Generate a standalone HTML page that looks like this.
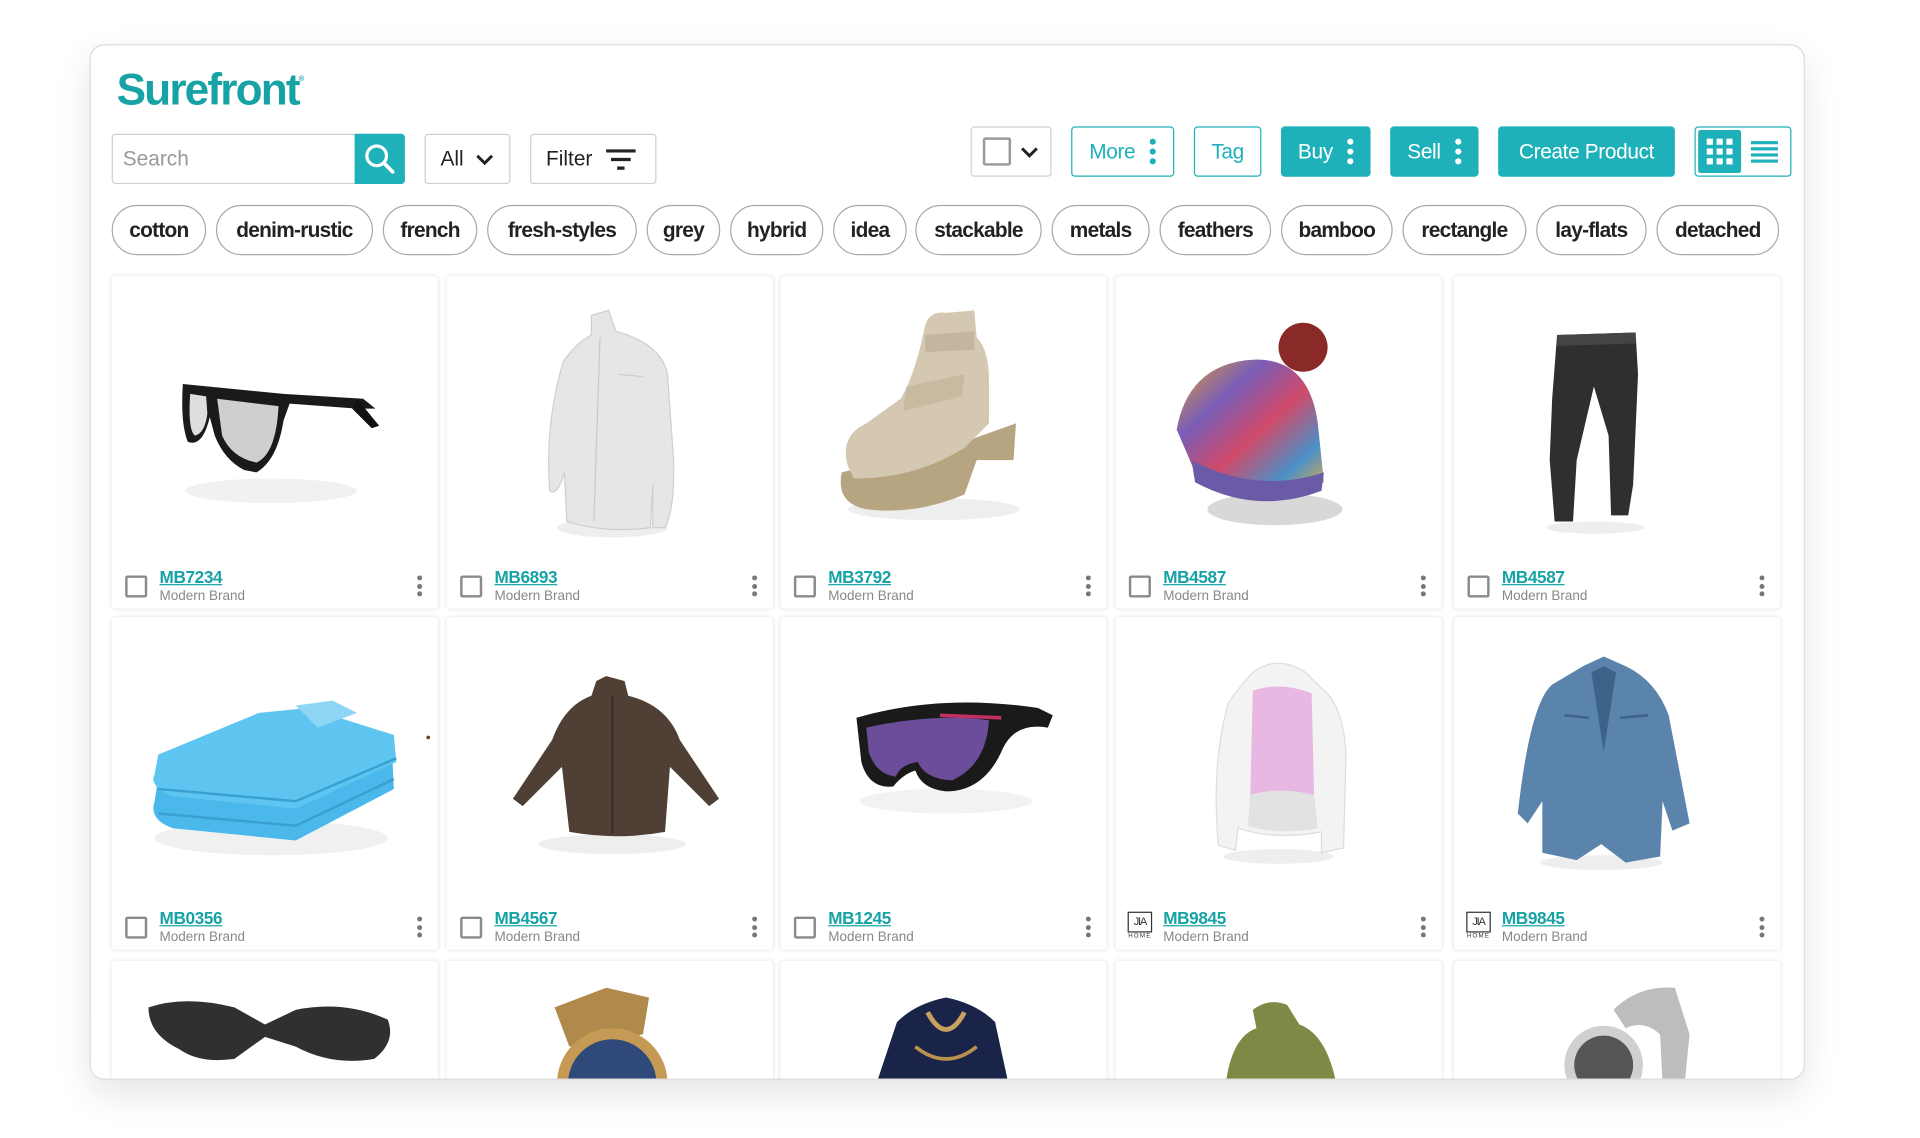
<!DOCTYPE html>
<html><head><meta charset="utf-8">
<style>
*{box-sizing:border-box;margin:0;padding:0}
html,body{width:1920px;height:1138px;overflow:hidden;background:#fff;font-family:"Liberation Sans",Arial,sans-serif}
#wrap{position:absolute;left:0;top:0;width:1550px;height:919px;transform:scale(1.227);transform-origin:0 0;overflow:hidden}
.panel{position:absolute;left:73px;top:36px;width:1398px;height:844px;border:1.5px solid #dcdcdc;border-radius:12px;background:#fff;overflow:hidden;box-shadow:0 12px 30px rgba(0,0,0,.10)}
.abs{position:absolute}
.logo{left:21px;top:15px;font-size:36px;color:#17a3a6;letter-spacing:-1.5px;font-weight:bold}
.logo sup{font-size:6px;letter-spacing:0;vertical-align:top;position:relative;top:10px}
.box{position:absolute;border:1.5px solid #cfcfcf;border-radius:3px;background:#fff;display:flex;align-items:center;font-size:17px;color:#222}
.btn{position:absolute;border:1.5px solid #1fb1ba;border-radius:3px;display:flex;align-items:center;justify-content:center;font-size:17px;color:#1fb1ba;letter-spacing:-0.3px}
.fill{background:#1fb1ba;color:#fff}
.dots{display:inline-flex;flex-direction:column;gap:3px;margin-left:12px}
.dots i{width:5px;height:5px;border-radius:50%;background:currentColor;display:block}
.pill{position:absolute;top:130px;height:41px;border:1.5px solid #a9a9a9;border-radius:21px;display:flex;align-items:center;justify-content:center;font-weight:bold;font-size:17px;letter-spacing:-0.6px;color:#222}
.card{position:absolute;width:266px;height:271px;background:#fff;border-radius:3px;box-shadow:0 0 3px rgba(0,0,0,.13)}
.card svg{position:absolute;left:0;top:0}
.cb{position:absolute;left:11px;top:244px;width:18px;height:18px;border:2px solid #8a8a8a;border-radius:2px}
.code{position:absolute;left:39px;top:237px;font-size:14px;font-weight:bold;color:#17a3a6;text-decoration:underline;letter-spacing:-0.3px}
.brand{position:absolute;left:39px;top:255px;font-size:11px;color:#888}
.kd{position:absolute;left:249px;top:244px;display:flex;flex-direction:column;gap:2.5px}
.kd i{width:4px;height:4px;border-radius:50%;background:#777;display:block}
.jia{position:absolute;left:10px;top:240px;width:20px;height:26px;font-size:9px;text-align:center;color:#333}
.jia b{display:block;border:1px solid #333;height:17px;line-height:15px;font-weight:normal;letter-spacing:-1px}
.jia span{font-size:5px;display:block;line-height:7px;letter-spacing:1px}
</style></head><body><div id="wrap">
<div class="panel">
<div class="abs logo">Surefront<sup>®</sup></div>

<div class="box" style="left:17px;top:72px;width:200px;height:41px;padding-left:8px;color:#999">Search</div>
<div class="abs" style="left:215px;top:72px;width:41px;height:41px;background:#1fb1ba;border-radius:0 3px 3px 0">
<svg width="41" height="41" viewBox="0 0 41 41"><circle cx="18" cy="18" r="8" fill="none" stroke="#fff" stroke-width="2.6"/><path d="M24 24l7 7" stroke="#fff" stroke-width="3" stroke-linecap="round"/></svg></div>
<div class="box" style="left:272px;top:72px;width:70px;height:41px;padding-left:12px">All<svg style="margin-left:9px" width="16" height="12" viewBox="0 0 16 12"><path d="M2 3l6 6 6-6" fill="none" stroke="#222" stroke-width="2.4"/></svg></div>
<div class="box" style="left:358px;top:72px;width:103px;height:41px;padding-left:12px">Filter<svg style="margin-left:10px" width="26" height="18" viewBox="0 0 26 18"><path d="M1 2h24M5 9h16M10 16h6" stroke="#222" stroke-width="2.6"/></svg></div>

<div class="box" style="left:717px;top:66px;width:66px;height:41px;padding-left:9px"><span style="width:23px;height:23px;border:2.5px solid #999;border-radius:2px;display:block"></span><svg style="margin-left:7px" width="16" height="12" viewBox="0 0 16 12"><path d="M2 3l6 6 6-6" fill="none" stroke="#222" stroke-width="2.4"/></svg></div>
<div class="btn" style="left:799px;top:66px;width:84px;height:41px">More<span class="dots"><i></i><i></i><i></i></span></div>
<div class="btn" style="left:899px;top:66px;width:55px;height:41px">Tag</div>
<div class="btn fill" style="left:970px;top:66px;width:73px;height:41px">Buy<span class="dots"><i></i><i></i><i></i></span></div>
<div class="btn fill" style="left:1059px;top:66px;width:72px;height:41px">Sell<span class="dots"><i></i><i></i><i></i></span></div>
<div class="btn fill" style="left:1147px;top:66px;width:144px;height:41px">Create Product</div>
<div class="btn" style="left:1307px;top:66px;width:79px;height:41px;justify-content:flex-start;padding:2px">
<div style="width:35px;height:35px;background:#1fb1ba;border-radius:2px;position:relative"><svg width="35" height="35" viewBox="0 0 35 35" fill="#fff"><rect x="7" y="7" width="5" height="5"/><rect x="15" y="7" width="5" height="5"/><rect x="23" y="7" width="5" height="5"/><rect x="7" y="15" width="5" height="5"/><rect x="15" y="15" width="5" height="5"/><rect x="23" y="15" width="5" height="5"/><rect x="7" y="23" width="5" height="5"/><rect x="15" y="23" width="5" height="5"/><rect x="23" y="23" width="5" height="5"/></svg></div>
<svg style="margin-left:7px" width="24" height="22" viewBox="0 0 24 22" fill="#1fb1ba"><rect x="1" y="2" width="22" height="2.6"/><rect x="1" y="7" width="22" height="2.6"/><rect x="1" y="12" width="22" height="2.6"/><rect x="1" y="17" width="22" height="2.6"/></svg></div>

<div class="pill" style="left:17px;width:77px">cotton</div>
<div class="pill" style="left:102px;width:128px">denim-rustic</div>
<div class="pill" style="left:238px;width:77px">french</div>
<div class="pill" style="left:323px;width:122px">fresh-styles</div>
<div class="pill" style="left:453px;width:60px">grey</div>
<div class="pill" style="left:521px;width:76px">hybrid</div>
<div class="pill" style="left:605px;width:60px">idea</div>
<div class="pill" style="left:672px;width:103px">stackable</div>
<div class="pill" style="left:783px;width:80px">metals</div>
<div class="pill" style="left:871px;width:91px">feathers</div>
<div class="pill" style="left:970px;width:91px">bamboo</div>
<div class="pill" style="left:1069px;width:101px">rectangle</div>
<div class="pill" style="left:1178px;width:90px">lay-flats</div>
<div class="pill" style="left:1276px;width:100px">detached</div>

<!-- Row 1 -->
<div class="card" style="left:17px;top:188px"><svg width="266" height="230"><ellipse cx="130" cy="175" rx="70" ry="10" fill="#f1f1f1"/><path d="M58 88 L140 96 L205 100 L215 108 L200 108 L145 104 L140 118 Q135 150 118 160 L108 158 Q92 150 84 130 L80 115 Q74 140 62 135 Q56 120 58 88Z" fill="#1a1a1a"/><path d="M64 96 Q62 126 68 130 Q76 128 78 112 L77 98Z" fill="#ddd"/><path d="M86 100 L136 106 Q134 145 118 152 Q98 148 90 130Z" fill="#cfcfcf"/><path d="M200 100 L218 122 L212 124 L196 108Z" fill="#111"/></svg>
<div class="cb"></div><div class="code">MB7234</div><div class="brand">Modern Brand</div><div class="kd"><i></i><i></i><i></i></div></div>

<div class="card" style="left:290px;top:188px"><svg width="266" height="230"><ellipse cx="135" cy="205" rx="45" ry="8" fill="#eee"/><path d="M118 32 L132 28 L138 45 Q175 55 180 80 L185 150 Q186 190 178 205 L168 205 L168 170 L166 205 Q130 210 98 200 L96 160 Q90 180 84 175 Q80 120 95 70 Q105 55 118 48Z" fill="#e6e6e6" stroke="#cfcfcf"/><path d="M125 50 L120 200" stroke="#c9c9c9"/><path d="M140 80 L160 82" stroke="#ccc"/></svg>
<div class="cb"></div><div class="code">MB6893</div><div class="brand">Modern Brand</div><div class="kd"><i></i><i></i><i></i></div></div>

<div class="card" style="left:562px;top:188px"><svg width="266" height="230"><ellipse cx="125" cy="190" rx="70" ry="9" fill="#eee"/><path d="M50 160 Q45 185 70 190 Q110 195 150 178 L160 150 L190 150 L192 120 L150 135Z" fill="#b7a582"/><path d="M55 155 Q48 130 70 120 L98 100 Q110 80 118 40 Q122 28 135 30 L158 28 L160 50 Q170 60 170 85 L170 120 L150 140 Q110 165 60 165Z" fill="#d5c8b2"/><path d="M118 48 L158 45 L158 60 L118 62Z" fill="#c4b69e"/><path d="M103 90 L150 80 L148 98 L100 110Z" fill="#c8baa1"/></svg>
<div class="cb"></div><div class="code">MB3792</div><div class="brand">Modern Brand</div><div class="kd"><i></i><i></i><i></i></div></div>

<div class="card" style="left:835px;top:188px"><svg width="266" height="230"><defs><linearGradient id="bn" x1="0" y1="0" x2="1" y2="1"><stop offset="0" stop-color="#e0a030"/><stop offset=".3" stop-color="#7a5db8"/><stop offset=".55" stop-color="#d04a6a"/><stop offset=".8" stop-color="#4a90c8"/><stop offset="1" stop-color="#e8b040"/></linearGradient></defs><ellipse cx="130" cy="190" rx="55" ry="13" fill="#d8d8d8"/><circle cx="153" cy="58" r="20" fill="#8a2a28"/><path d="M50 125 Q60 70 115 68 Q158 68 165 120 L170 168 Q120 190 65 160Z" fill="url(#bn)"/><path d="M62 150 Q115 178 170 160 L168 175 Q115 195 65 168Z" fill="#6a5aa8"/></svg>
<div class="cb"></div><div class="code">MB4587</div><div class="brand">Modern Brand</div><div class="kd"><i></i><i></i><i></i></div></div>

<div class="card" style="left:1111px;top:188px"><svg width="266" height="230"><ellipse cx="115" cy="205" rx="40" ry="5" fill="#eee"/><path d="M84 48 L148 46 L150 80 L146 170 L142 195 L128 195 L126 130 L114 90 L100 150 L97 200 L82 200 L78 150 L80 100Z" fill="#2f2f2f"/><path d="M84 48 L148 46 L148 55 L84 57Z" fill="#444"/></svg>
<div class="cb"></div><div class="code">MB4587</div><div class="brand">Modern Brand</div><div class="kd"><i></i><i></i><i></i></div></div>

<!-- Row 2 -->
<div class="card" style="left:17px;top:466px"><svg width="266" height="230"><ellipse cx="130" cy="180" rx="95" ry="14" fill="#f0f0f0"/><path d="M35 150 Q30 165 50 172 L150 182 L230 140 L228 100 L150 110 L40 118Z" fill="#4ab8ea"/><path d="M35 128 Q30 138 50 146 L150 156 L232 118 L230 96 L160 74 L120 78 L38 112Z" fill="#5ec5f0"/><path d="M150 72 L180 68 L200 78 L168 90Z" fill="#8dd6f5"/><path d="M38 140 L150 150 L232 115" fill="none" stroke="#3aa0d0" stroke-width="2"/><path d="M38 160 L150 170 L230 132" fill="none" stroke="#3aa0d0" stroke-width="2"/><circle cx="258" cy="98" r="1.5" fill="#7a3a10"/></svg>
<div class="cb"></div><div class="code">MB0356</div><div class="brand">Modern Brand</div><div class="kd"><i></i><i></i><i></i></div></div>

<div class="card" style="left:290px;top:466px"><svg width="266" height="230"><ellipse cx="135" cy="185" rx="60" ry="8" fill="#eee"/><path d="M122 52 L130 48 L145 52 L148 64 Q180 72 190 100 L222 148 L214 154 L182 122 L178 175 Q140 182 100 175 L94 122 L62 154 L54 148 L86 100 Q96 72 118 64Z" fill="#4f3f35"/><path d="M135 64 L135 176" stroke="#3a2e26" stroke-width="2"/></svg>
<div class="cb"></div><div class="code">MB4567</div><div class="brand">Modern Brand</div><div class="kd"><i></i><i></i><i></i></div></div>

<div class="card" style="left:562px;top:466px"><svg width="266" height="230"><ellipse cx="135" cy="150" rx="70" ry="10" fill="#f2f2f2"/><path d="M62 82 Q130 62 210 74 L222 80 L218 90 Q190 85 180 110 Q165 142 135 142 Q115 140 110 125 Q100 128 92 138 Q72 140 66 118Z" fill="#1a1a1a"/><path d="M70 90 Q125 78 170 84 Q168 120 140 133 Q118 132 112 118 Q98 120 94 130 Q78 128 72 110Z" fill="#6b4d9a"/><path d="M130 80 L180 82" stroke="#c03060" stroke-width="3"/></svg>
<div class="cb"></div><div class="code">MB1245</div><div class="brand">Modern Brand</div><div class="kd"><i></i><i></i><i></i></div></div>

<div class="card" style="left:835px;top:466px"><svg width="266" height="230"><ellipse cx="133" cy="195" rx="45" ry="6" fill="#eee"/><path d="M112 45 Q132 30 155 45 L168 58 Q185 70 188 110 L186 188 L168 192 L168 175 Q130 182 100 172 L98 190 L84 186 Q78 120 92 70 Q100 58 112 45Z" fill="#f3f3f3" stroke="#ddd"/><path d="M112 60 Q135 52 160 62 L162 145 Q132 138 110 145Z" fill="#e9b8e2"/><path d="M110 145 Q135 138 162 145 L165 172 Q132 178 108 170Z" fill="#e2e2e2"/></svg>
<div class="jia"><b>JIA</b><span>HOME</span></div><div class="code">MB9845</div><div class="brand">Modern Brand</div><div class="kd"><i></i><i></i><i></i></div></div>

<div class="card" style="left:1111px;top:466px"><svg width="266" height="230"><ellipse cx="120" cy="200" rx="50" ry="6" fill="#eee"/><path d="M105 40 L122 32 L140 40 Q165 52 175 80 L192 168 L178 174 L170 150 L168 195 L140 200 L120 185 L100 198 L72 192 L72 150 L60 168 L52 160 Q62 70 80 55Z" fill="#5a84ab"/><path d="M112 45 L122 40 L132 45 L122 110Z" fill="#3d6388"/><path d="M90 80 L110 82 M135 82 L158 80" stroke="#3d6388" stroke-width="2"/></svg>
<div class="jia"><b>JIA</b><span>HOME</span></div><div class="code">MB9845</div><div class="brand">Modern Brand</div><div class="kd"><i></i><i></i><i></i></div></div>

<!-- Row 3 -->
<div class="card" style="left:17px;top:746px"><svg width="266" height="230"><path d="M30 38 Q60 28 100 38 L125 52 L150 40 Q190 32 225 48 Q232 66 214 80 Q180 86 150 70 L125 62 L100 80 Q72 84 55 72 Q30 60 30 38Z" fill="#303030"/></svg></div>
<div class="card" style="left:290px;top:746px"><svg width="266" height="230"><path d="M88 38 L130 22 L165 30 L160 60 L100 70Z" fill="#b08a4a"/><circle cx="135" cy="100" r="45" fill="#c49a55"/><circle cx="135" cy="100" r="36" fill="#2f4a7a"/></svg></div>
<div class="card" style="left:562px;top:746px"><svg width="266" height="230"><path d="M95 50 Q110 35 135 30 Q160 35 175 50 L188 110 L75 110Z" fill="#1a2448"/><path d="M120 42 Q135 70 150 42" fill="none" stroke="#c8a060" stroke-width="4"/><path d="M110 70 Q135 90 160 70" fill="none" stroke="#b89050" stroke-width="3"/></svg></div>
<div class="card" style="left:835px;top:746px"><svg width="266" height="230"><path d="M112 40 Q125 30 140 36 L150 52 Q172 60 180 100 L90 100 Q95 62 115 55Z" fill="#7d8a46"/></svg></div>
<div class="card" style="left:1111px;top:746px"><svg width="266" height="230"><path d="M130 40 Q150 20 180 22 L192 60 L188 100 L170 100 L168 60 Q155 48 140 55Z" fill="#bdbdbd"/><circle cx="122" cy="85" r="32" fill="#d0d0d0"/><circle cx="122" cy="85" r="24" fill="#555"/></svg></div>
</div>
</div></body></html>
